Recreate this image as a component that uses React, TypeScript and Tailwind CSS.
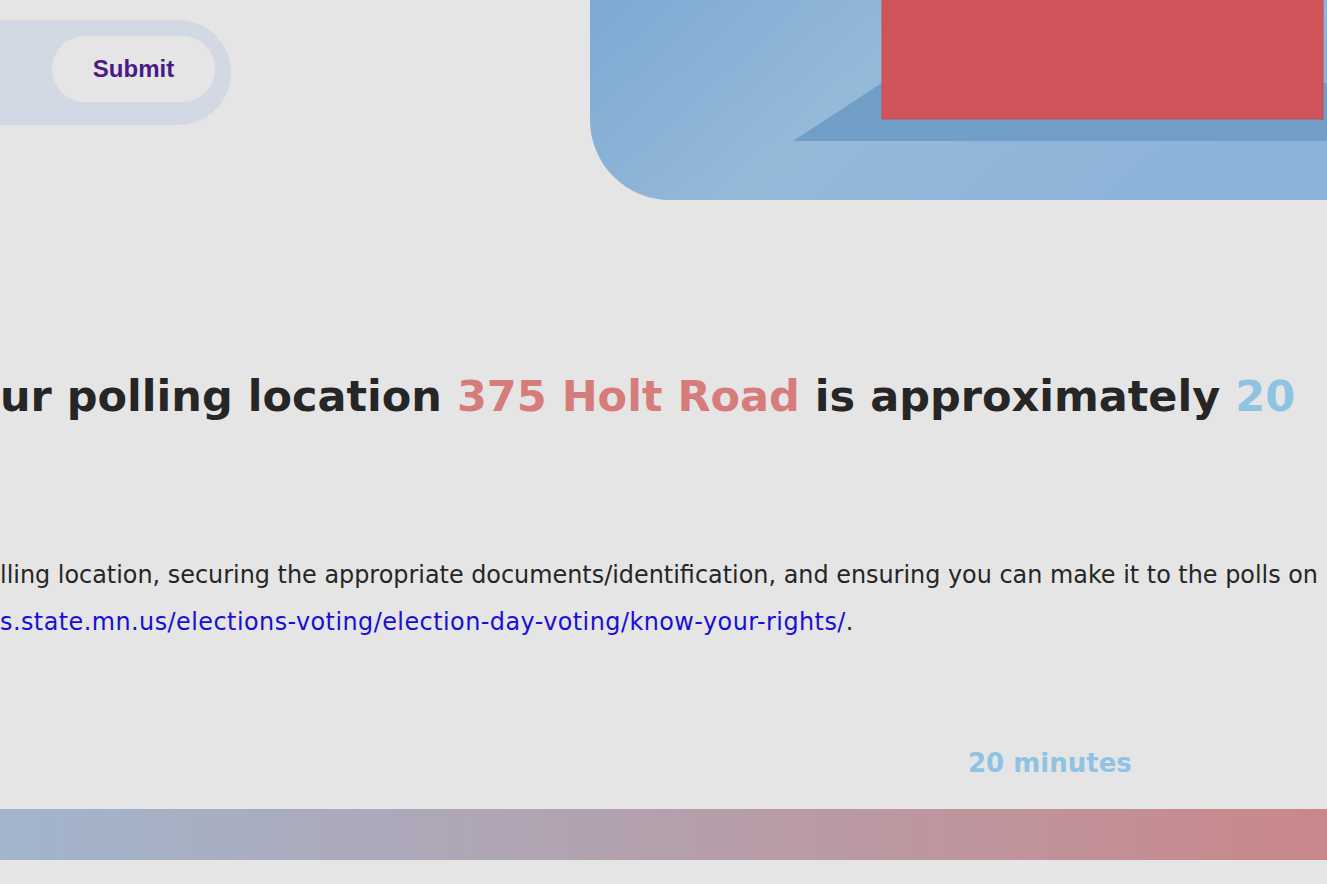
export default function App() {
  return (
    <div className="w-full h-[884px] overflow-hidden bg-[#e5e5e5] flex flex-col font-['DejaVu_Sans',sans-serif]">
      {/* top row: address form + banner art */}
      <div className="h-[200px] flex justify-between shrink-0">
        <div className="mt-[20px] w-[231px] h-[105px] rounded-r-full bg-[#d3d9e4] flex items-start justify-end pt-[16px] pr-[16px]">
          <button className="w-[163px] h-[66px] rounded-full bg-[#e5e5e5] text-[#4a1a87] text-[24px] font-bold font-['Liberation_Sans',Arial,sans-serif]">
            Submit
          </button>
        </div>
        <div className="w-[737px] h-[200px] rounded-bl-[80px] overflow-hidden">
          <svg width="737" height="200" viewBox="0 0 737 200">
            <defs>
              <linearGradient id="sky" x1="0" y1="0" x2="1" y2="0.3">
                <stop offset="0" stopColor="#7caad3" />
                <stop offset="0.45" stopColor="#95b9d9" />
                <stop offset="1" stopColor="#8cb3d9" />
              </linearGradient>
            </defs>
            <rect width="737" height="200" fill="url(#sky)" />
            <polygon points="203,141 292,83 737,83 737,141" fill="#709ec6" />
            <rect x="292" y="-1" width="441" height="120" fill="#d0545a" stroke="#c44c55" strokeWidth="1" />
          </svg>
        </div>
      </div>

      <h1 className="mt-[166px] h-[60px] leading-[60px] whitespace-nowrap text-[43px] font-bold text-[#262626]">
        ur polling location <span className="text-[#d67d7c]">375 Holt Road</span> is approximately{' '}
        <span className="text-[#8ec3e4]">20</span>
      </h1>

      <div className="mt-[126px] text-[23.9px] leading-[47px] text-[#262626] whitespace-nowrap">
        <p>
          lling location, securing the appropriate documents/identification, and ensuring you can make it to the polls on
        </p>
        <p>
          <a className="text-[#1a0ed6] tracking-[0.45px]">s.state.mn.us/elections-voting/election-day-voting/know-your-rights/</a>.
        </p>
      </div>

      <div className="mt-[99px] h-[36px] leading-[36px] pl-[968px] text-[26px] font-bold text-[#8ec3e4] whitespace-nowrap">
        20 minutes
      </div>

      <div className="mt-[28px] h-[51px] shrink-0 bg-gradient-to-r from-[#a1b5cc] via-[#b4a0ad] to-[#c9878a]" />
    </div>
  );
}
